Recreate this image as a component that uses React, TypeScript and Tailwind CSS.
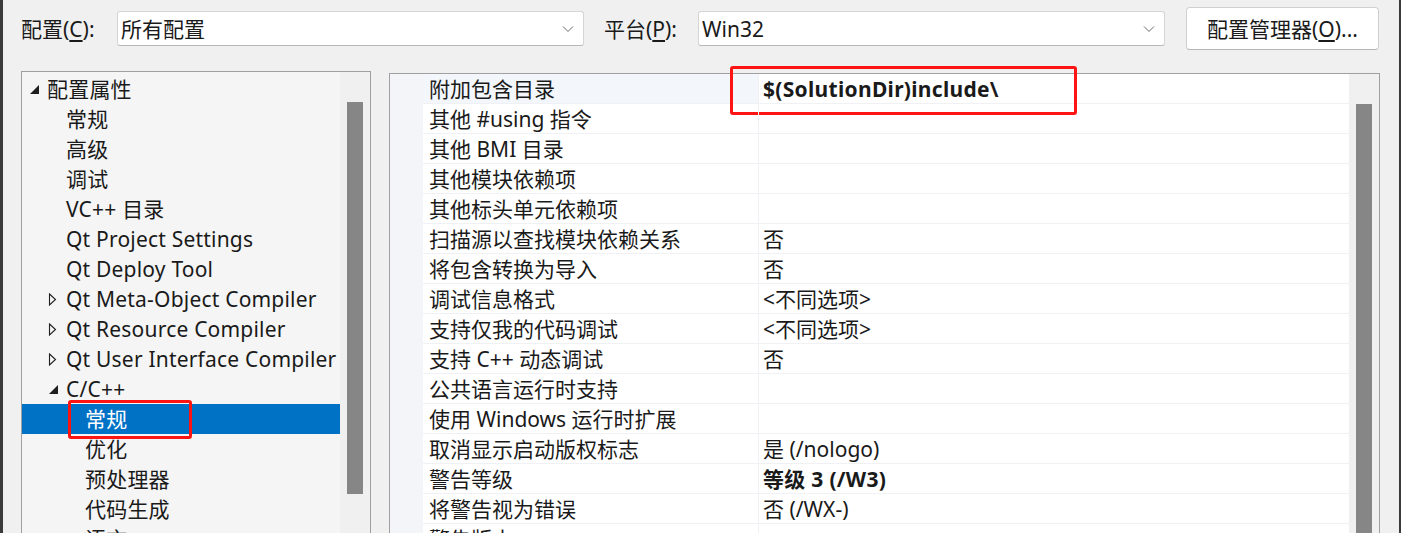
import React from "react";

const FONT = { fontFamily: '"Noto Sans", "Noto Sans CJK SC", sans-serif' };

type TreeItem = {
  label: string;
  level: 0 | 1 | 2;
  exp?: "open" | "closed";
  selected?: boolean;
};

const tree: TreeItem[] = [
  { label: "配置属性", level: 0, exp: "open" },
  { label: "常规", level: 1 },
  { label: "高级", level: 1 },
  { label: "调试", level: 1 },
  { label: "VC++ 目录", level: 1 },
  { label: "Qt Project Settings", level: 1 },
  { label: "Qt Deploy Tool", level: 1 },
  { label: "Qt Meta-Object Compiler", level: 1, exp: "closed" },
  { label: "Qt Resource Compiler", level: 1, exp: "closed" },
  { label: "Qt User Interface Compiler", level: 1, exp: "closed" },
  { label: "C/C++", level: 1, exp: "open" },
  { label: "常规", level: 2, selected: true },
  { label: "优化", level: 2 },
  { label: "预处理器", level: 2 },
  { label: "代码生成", level: 2 },
  { label: "语言", level: 2 },
];

const levelPad: Record<number, string> = {
  0: "pl-[7px]",
  1: "pl-[26px]",
  2: "pl-[45px]",
};

type Prop = { name: string; value?: string; bold?: boolean };

const props: Prop[] = [
  { name: "附加包含目录", value: "$(SolutionDir)include\\", bold: true },
  { name: "其他 #using 指令" },
  { name: "其他 BMI 目录" },
  { name: "其他模块依赖项" },
  { name: "其他标头单元依赖项" },
  { name: "扫描源以查找模块依赖关系", value: "否" },
  { name: "将包含转换为导入", value: "否" },
  { name: "调试信息格式", value: "<不同选项>" },
  { name: "支持仅我的代码调试", value: "<不同选项>" },
  { name: "支持 C++ 动态调试", value: "否" },
  { name: "公共语言运行时支持" },
  { name: "使用 Windows 运行时扩展" },
  { name: "取消显示启动版权标志", value: "是 (/nologo)" },
  { name: "警告等级", value: "等级 3 (/W3)", bold: true },
  { name: "将警告视为错误", value: "否 (/WX-)" },
  { name: "警告版本" },
];

function Chevron() {
  return (
    <svg width="12" height="8" viewBox="0 0 12 8">
      <polyline points="1,1.5 6,6.5 11,1.5" fill="none" stroke="#6b6b6b" strokeWidth="1" />
    </svg>
  );
}

function OpenTri() {
  return (
    <svg width="11" height="11" viewBox="0 0 11 11">
      <polygon points="10,1 10,10 1,10" fill="#1e1e1e" />
    </svg>
  );
}

function ClosedTri() {
  return (
    <svg width="9" height="13" viewBox="0 0 9 13">
      <polygon points="1.5,1 7.5,6.5 1.5,12" fill="none" stroke="#1e1e1e" strokeWidth="1.1" />
    </svg>
  );
}

function Select({ text }: { text: string }) {
  return (
    <div className="w-[467px] h-[35px] bg-white border border-[#d5d5d5] border-b-[#b8b8b8] rounded-[3px] flex items-center pl-[3px] pr-[9px]">
      <span className="flex-1 text-[21px] text-[#1a1a1a] leading-none translate-y-[1px]">{text}</span>
      <Chevron />
    </div>
  );
}

export default function App() {
  return (
    <div
      className="w-[1401px] h-[533px] bg-[#f0f0f0] overflow-hidden flex text-[#1a1a1a]"
      style={FONT}
    >
      <div className="w-[3px] h-full bg-[#3a3a3a] shrink-0" />
      <div className="flex-1 flex flex-col">
        {/* top bar */}
        <div className="flex items-center h-[43px] mt-[7px] pl-[18px]">
          <div className="w-[96px] text-[21px] leading-none translate-y-[1px]">
            配置(<span className="underline underline-offset-[3px]">C</span>):
          </div>
          <Select text="所有配置" />
          <div className="w-[94px] ml-[20px] text-[21px] leading-none translate-y-[1px]">
            平台(<span className="underline underline-offset-[3px]">P</span>):
          </div>
          <Select text="Win32" />
          <div className="ml-[21px] w-[193px] h-[43px] bg-white border border-[#d0d0d0] border-b-[#b5b5b5] rounded-[4px] flex items-center justify-center text-[21px] leading-none">
            <span className="translate-y-[1px]">
              配置管理器(<span className="underline underline-offset-[3px]">O</span>)...
            </span>
          </div>
        </div>

        {/* panels */}
        <div className="flex items-start mt-[21px] pl-[18px] gap-[18px]">
          {/* left tree */}
          <div className="w-[350px] h-[480px] border border-[#a0a0a0] bg-[#f5f5f5] flex shrink-0">
            <div className="w-[318px] pt-[2px] flex flex-col">
              {tree.map((t, i) => (
                <div
                  key={i}
                  className={`relative h-[30px] flex items-center shrink-0 ${levelPad[t.level]} ${
                    t.selected ? "bg-[#0072c6] text-white" : ""
                  }`}
                >
                  <div className="w-[18px] h-[30px] flex items-center">
                    {t.exp === "open" ? <OpenTri /> : t.exp === "closed" ? <ClosedTri /> : null}
                  </div>
                  <span className="text-[21px] leading-none whitespace-nowrap tracking-[0.2px]">{t.label}</span>
                  {t.selected && (
                    <div className="absolute left-[46px] top-[-4px] w-[124px] h-[39px] border-[3px] border-[#ff1414] rounded-[3px]" />
                  )}
                </div>
              ))}
            </div>
            <div className="flex-1 bg-[#f0f0f0] flex justify-center pt-[30px]">
              <div className="w-[16px] h-[392px] bg-[#868686]" />
            </div>
          </div>

          {/* right grid */}
          <div className="w-[991px] h-[480px] border border-[#a0a0a0] bg-white flex mt-[2px] shrink-0">
            <div className="w-[33px] bg-[#f3f5f9] shrink-0" />
            <div className="w-[926px] flex flex-col">
              {props.map((p, i) => (
                <div key={i} className="relative h-[30px] flex shrink-0 border-b border-[#f0f1f5]">
                  <div
                    className={`w-[335px] flex items-center pl-[6px] ${i === 0 ? "bg-[#f3f6fb]" : ""}`}
                  >
                    <span className="text-[21px] leading-none whitespace-nowrap translate-y-[1px]">{p.name}</span>
                  </div>
                  <div className="flex-1 flex items-center pl-[4px] border-l border-[#f0f1f5]">
                    {p.value && (
                      <span
                        className={`text-[21px] leading-none whitespace-nowrap translate-y-[1px] ${p.bold ? "font-bold tracking-[0.3px]" : ""}`}
                      >
                        {p.value}
                      </span>
                    )}
                  </div>
                  {i === 0 && (
                    <div className="absolute left-[307px] top-[-8px] w-[347px] h-[49px] border-[3px] border-[#ff1414] rounded-[3px]" />
                  )}
                </div>
              ))}
            </div>
            <div className="w-[30px] bg-[#f0f0f0] flex justify-center pt-[30px] shrink-0">
              <div className="w-[16px] h-[440px] bg-[#868686]" />
            </div>
          </div>
        </div>
      </div>
      <div className="w-[2px] h-full bg-[#3a3a3a] shrink-0" />
    </div>
  );
}
